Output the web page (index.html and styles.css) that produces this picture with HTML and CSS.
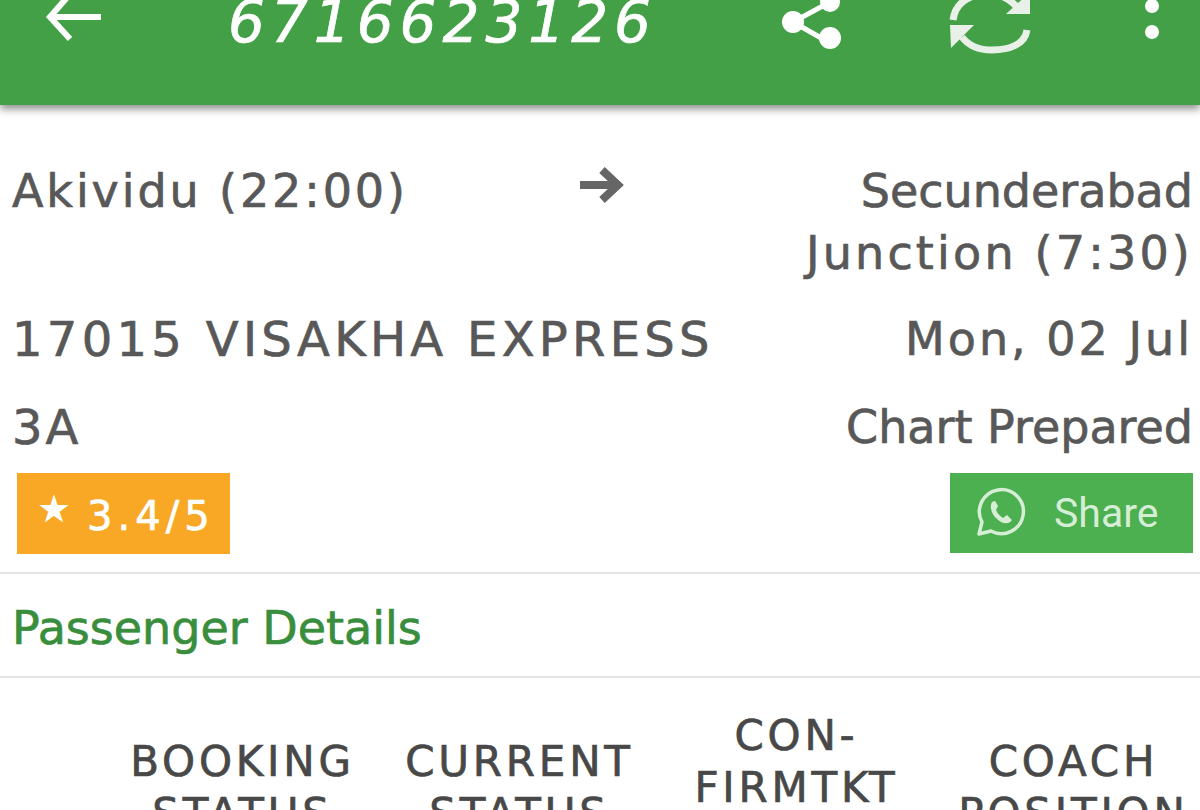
FILE: index.html
```html
<!DOCTYPE html>
<html lang="en">
<head>
    <meta charset="UTF-8">
    <meta name="viewport" content="width=device-width, initial-scale=1.0">
    <title>PNR Status</title>
    <link rel="stylesheet" href="styles.css">
</head>
<body>

    <!-- Top bar -->
    <header class="topbar">
        <svg class="icon_back" width="60" height="50" viewBox="0 0 60 50">
            <path d="M57 17H8M26 -6L6 17L26 39" fill="none" stroke="#fff" stroke-width="6"/>
        </svg>
        <div class="topbar_title">6716623126</div>
        <svg class="icon_share" width="70" height="56" viewBox="0 0 70 56">
            <path d="M51 2L14 22L51 43" fill="none" stroke="#fff" stroke-width="5"/>
            <circle cx="51" cy="2" r="10" fill="#fff"/>
            <circle cx="14" cy="22" r="11" fill="#fff"/>
            <circle cx="51" cy="38" r="11" fill="#fff"/>
        </svg>
        <svg class="icon_refresh" width="84" height="56" viewBox="0 0 84 56">
            <path d="M5 20C7 4 20 -6 40 -6C54 -6 64 0 71 10" fill="none" stroke="#e8f0e8" stroke-width="7"/>
            <path d="M79 30C77 44 62 50 44 50C30 50 20 45 14 37" fill="none" stroke="#e8f0e8" stroke-width="7"/>
            <path d="M58 14H82V-8Z" fill="#e8f0e8"/>
            <path d="M2 25H26L3 48Z" fill="#e8f0e8"/>
        </svg>
        <svg class="icon_more" width="20" height="50" viewBox="0 0 20 50">
            <circle cx="10" cy="6" r="7" fill="#fff"/>
            <circle cx="10" cy="32" r="7" fill="#fff"/>
        </svg>
    </header>

    <!-- Journey details -->
    <section class="viagem">
        <div class="linha_estacoes">
            <div class="origem">Akividu (22:00)</div>
            <svg class="icon_seta" width="46" height="40" viewBox="0 0 46 40">
                <path d="M2 20H38M24 5L40 20L24 35" fill="none" stroke="#666" stroke-width="8"/>
            </svg>
            <div class="destino">
                <div>Secunderabad</div>
                <div class="destino_juncao">Junction (7:30)</div>
            </div>
        </div>
        <div class="linha linha_trem">
            <div class="trem">17015 VISAKHA EXPRESS</div>
            <div class="data">Mon, 02 Jul</div>
        </div>
        <div class="linha linha_classe">
            <div class="classe">3A</div>
            <div>Chart Prepared</div>
        </div>
        <div class="linha linha_botoes">
            <div class="nota"><span class="nota_estrela">★</span><span class="nota_valor">3.4/5</span></div>
            <div class="compartilhar">
                <svg width="52" height="52" viewBox="0 0 52 52">
                    <path d="M5 47L8 35A22 22 0 1 1 17 44Z" fill="none" stroke="#d6edd6" stroke-width="3.5" stroke-linejoin="round"/>
                    <path d="M18 15C15 20 18 28 23 32C28 37 35 38 38 33L33 28L29 31C26 29 23 26 22 23L24 19L21 14Z" fill="#d6edd6"/>
                </svg>
                <span>Share</span>
            </div>
        </div>
    </section>

    <div class="secao_titulo">Passenger Details</div>

    <!-- Passenger table header -->
    <div class="tabela_cabecalho">
        <div>BOOKING<br>STATUS</div>
        <div>CURRENT<br>STATUS</div>
        <div>CON-<br>FIRMTKT<br>&nbsp;</div>
        <div>COACH<br>POSITION</div>
    </div>

</body>
</html>
```

FILE: styles.css
```css
html, body {
    height: 810px;
    overflow: hidden;
}
body {
    margin: 0;
    padding: 0;
    background-color: #fff;
    font-family: "DejaVu Sans", sans-serif;
    color: #585858;
    -webkit-text-stroke: 0.7px currentColor;
}
.topbar {
    display: flex;
    align-items: flex-start;
    height: 105px;
    background-color: #43a047;
    box-shadow: 0 4px 8px rgba(0, 0, 0, 0.45);
    overflow: hidden;
}
.icon_back {
    margin: 0 0 0 44px;
    flex: none;
}
.topbar_title {
    width: 430px;
    margin: -20px 0 0 124px;
    color: #fff;
    font-size: 58px;
    font-style: italic;
    letter-spacing: 6px;
    line-height: 84px;
    white-space: nowrap;
}
.icon_share {
    margin: 0 0 0 121px;
    flex: none;
}
.icon_refresh {
    margin: 0 0 0 99px;
    flex: none;
}
.icon_more {
    margin: 0 0 0 110px;
    flex: none;
}
.viagem {
    padding: 0 7px 0 12px;
    border-bottom: 2px solid #e4e4e4;
}
.linha_estacoes {
    display: grid;
    grid-template-columns: 566px 46px 1fr;
    padding-top: 55px;
    font-size: 46px;
    line-height: 62px;
    white-space: nowrap;
}
.linha {
    display: flex;
    justify-content: space-between;
    align-items: flex-start;
    font-size: 46px;
    line-height: 62px;
    white-space: nowrap;
}
.origem {
    letter-spacing: 2.9px;
}
.destino {
    text-align: right;
}
.destino_juncao {
    letter-spacing: 3.2px;
}
.icon_seta {
    margin: 5px 0 0 0;
}
.linha_trem {
    padding-top: 24px;
}
.trem {
    font-size: 48px;
    letter-spacing: 4.3px;
}
.data {
    letter-spacing: 3px;
}
.linha_classe {
    padding-top: 26px;
}
.classe {
    font-size: 48px;
    letter-spacing: 3px;
}
.linha_botoes {
    padding: 15px 0 18px 5px;
}
.nota {
    display: flex;
    align-items: center;
    gap: 16px;
    width: 213px;
    height: 81px;
    box-sizing: border-box;
    padding: 0 0 0 20px;
    background-color: #f9a825;
    color: #fff;
    line-height: 81px;
}
.nota_estrela {
    font-size: 38px;
    margin-top: -8px;
    -webkit-text-stroke: 0;
}
.nota_valor {
    margin-top: 6px;
    font-size: 40px;
    letter-spacing: 5px;
}
.compartilhar {
    display: flex;
    align-items: center;
    gap: 28px;
    width: 243px;
    height: 80px;
    box-sizing: border-box;
    padding-left: 24px;
    background-color: #4caf50;
    color: #d6edd6;
    font-family: Roboto, sans-serif;
    font-size: 41px;
    -webkit-text-stroke: 0;
}
.secao_titulo {
    padding-left: 12px;
    height: 104px;
    box-sizing: border-box;
    border-bottom: 2px solid #e4e4e4;
    color: #388e3c;
    font-size: 46px;
    line-height: 108px;
}
.tabela_cabecalho {
    display: grid;
    grid-template-columns: repeat(4, 277px);
    align-items: center;
    margin: 32px 0 0 104px;
    color: #484848;
    font-size: 42px;
    letter-spacing: 3.8px;
    line-height: 52px;
    text-align: center;
    white-space: nowrap;
}
```
